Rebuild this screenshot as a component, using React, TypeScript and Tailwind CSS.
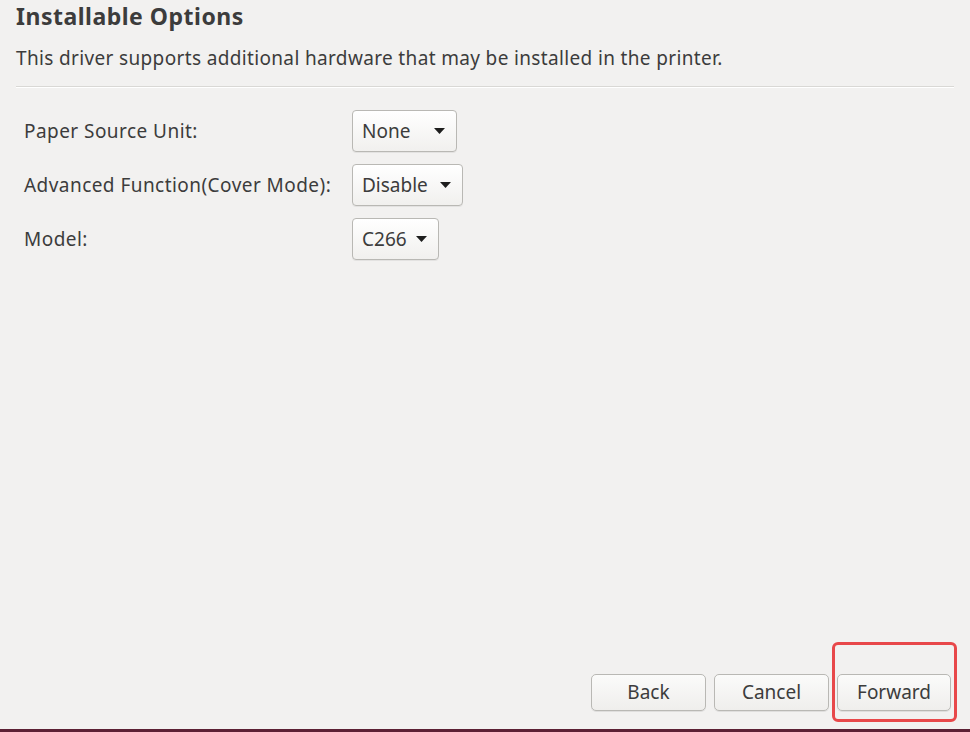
import React from 'react';

const rows = [
    { label: 'Paper Source Unit:', value: 'None', width: 'w-[105px]' },
    { label: 'Advanced Function(Cover Mode):', value: 'Disable', width: 'w-[111px]' },
    { label: 'Model:', value: 'C266', width: 'w-[87px]' },
];

function Caret() {
    return (
        <svg width="11" height="6" viewBox="0 0 11 6" className="shrink-0">
            <path d="M0 0 L11 0 L5.5 6 Z" fill="#1e1e1e" />
        </svg>
    );
}

function Combo({ value, width }: { value: string, width: string }) {
    return (
        <div className={`${width} h-[42px] flex items-center justify-between pl-[9px] pr-[11px] rounded-[4px] border border-[#b9b8b4] bg-gradient-to-b from-[#ffffff] to-[#f1f0ee] shadow-[0_1px_0_rgba(0,0,0,0.06)]`}>
            <span className="text-[19px]">{value}</span>
            <Caret />
        </div>
    );
}

function Button({ children }: { children: React.ReactNode }) {
    return (
        <div className="w-full h-[37px] flex items-center justify-center rounded-[5px] border border-[#b9b8b4] bg-gradient-to-b from-[#fbfbfa] to-[#efeeec] shadow-[0_1px_0_rgba(0,0,0,0.08)] text-[19px]">
            {children}
        </div>
    );
}

export default function App() {
    return (
        <div className="w-[970px] h-[732px] bg-[#f2f1f0] flex flex-col text-[#3c3c3c] font-['Noto_Sans','Open_Sans',sans-serif] overflow-hidden">
            <h1 className="pl-4 pt-[1px] text-[23px] leading-[30px] font-bold tracking-[0.5px]">Installable Options</h1>
            <p className="pl-4 mt-[14px] text-[19px] leading-[26px] tracking-[0.35px]">This driver supports additional hardware that may be installed in the printer.</p>
            <div className="mx-4 mt-[15px] h-px bg-[#d9d8d5] border-b border-white box-content" />

            <div className="mt-[22px] pl-6 grid grid-cols-[328px_auto] gap-y-[12px] items-center">
                {rows.map((r) => (
                    <React.Fragment key={r.label}>
                        <span className="text-[19px] tracking-[0.45px]">{r.label}</span>
                        <Combo value={r.value} width={r.width} />
                    </React.Fragment>
                ))}
            </div>

            <div className="flex-1" />

            <div className="flex justify-end gap-[8px] pr-[19px] pb-[18px]">
                <div className="w-[115px]"><Button>Back</Button></div>
                <div className="w-[115px]"><Button>Cancel</Button></div>
                <div className="w-[114px] relative">
                    <Button>Forward</Button>
                    <div className="absolute -left-[5px] -top-[32px] -right-[6px] -bottom-[11px] border-[3px] border-[#e8484a] rounded-[6px]" />
                </div>
            </div>
            <div className="h-[3px] bg-[#5c2034]" />
        </div>
    );
}
